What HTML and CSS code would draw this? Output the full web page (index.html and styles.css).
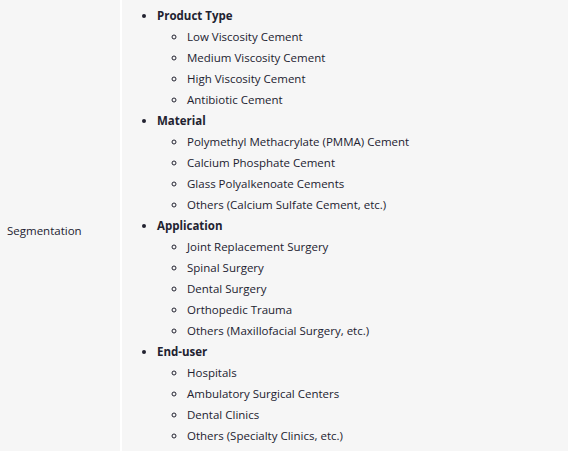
FILE: index.html
```html
<!DOCTYPE html>
<html>
<head>
<meta charset="utf-8">
<link rel="stylesheet" href="styles.css">
</head>
<body>
<table class="spec">
  <tr>
    <td class="label">Segmentation</td>
    <td class="value">
      <ul class="seg">
        <li class="head">Product Type
          <ul class="sub">
            <li>Low Viscosity Cement</li>
            <li>Medium Viscosity Cement</li>
            <li>High Viscosity Cement</li>
            <li>Antibiotic Cement</li>
          </ul>
        </li>
        <li class="head">Material
          <ul class="sub">
            <li>Polymethyl Methacrylate (PMMA) Cement</li>
            <li>Calcium Phosphate Cement</li>
            <li>Glass Polyalkenoate Cements</li>
            <li>Others (Calcium Sulfate Cement, etc.)</li>
          </ul>
        </li>
        <li class="head">Application
          <ul class="sub">
            <li>Joint Replacement Surgery</li>
            <li>Spinal Surgery</li>
            <li>Dental Surgery</li>
            <li>Orthopedic Trauma</li>
            <li>Others (Maxillofacial Surgery, etc.)</li>
          </ul>
        </li>
        <li class="head">End-user
          <ul class="sub">
            <li>Hospitals</li>
            <li>Ambulatory Surgical Centers</li>
            <li>Dental Clinics</li>
            <li>Others (Specialty Clinics, etc.)</li>
          </ul>
        </li>
      </ul>
    </td>
  </tr>
</table>
</body>
</html>
```

FILE: styles.css
```css
html, body {
  margin: 0;
  padding: 0;
  background: #f6f6f6;
  overflow: hidden;
}
body {
  font-family: "Open Sans", "Noto Sans", sans-serif;
  font-size: 11.5px;
  color: #222230;
}
.spec {
  border-collapse: collapse;
  width: 100%;
}
.spec td {
  background: #f6f6f6;
  vertical-align: middle;
}
.label {
  width: 106px;
  padding: 10px 7px;
  border-right: 2px solid #ffffff;
}
.value {
  padding: 5px 7px 15px;
}
.seg {
  margin: 0;
  padding-left: 28px;
  list-style: disc;
  line-height: 21px;
}
.head {
  font-weight: bold;
}
.sub {
  margin: 0;
  padding-left: 30px;
  list-style: circle;
  font-weight: normal;
}
```
